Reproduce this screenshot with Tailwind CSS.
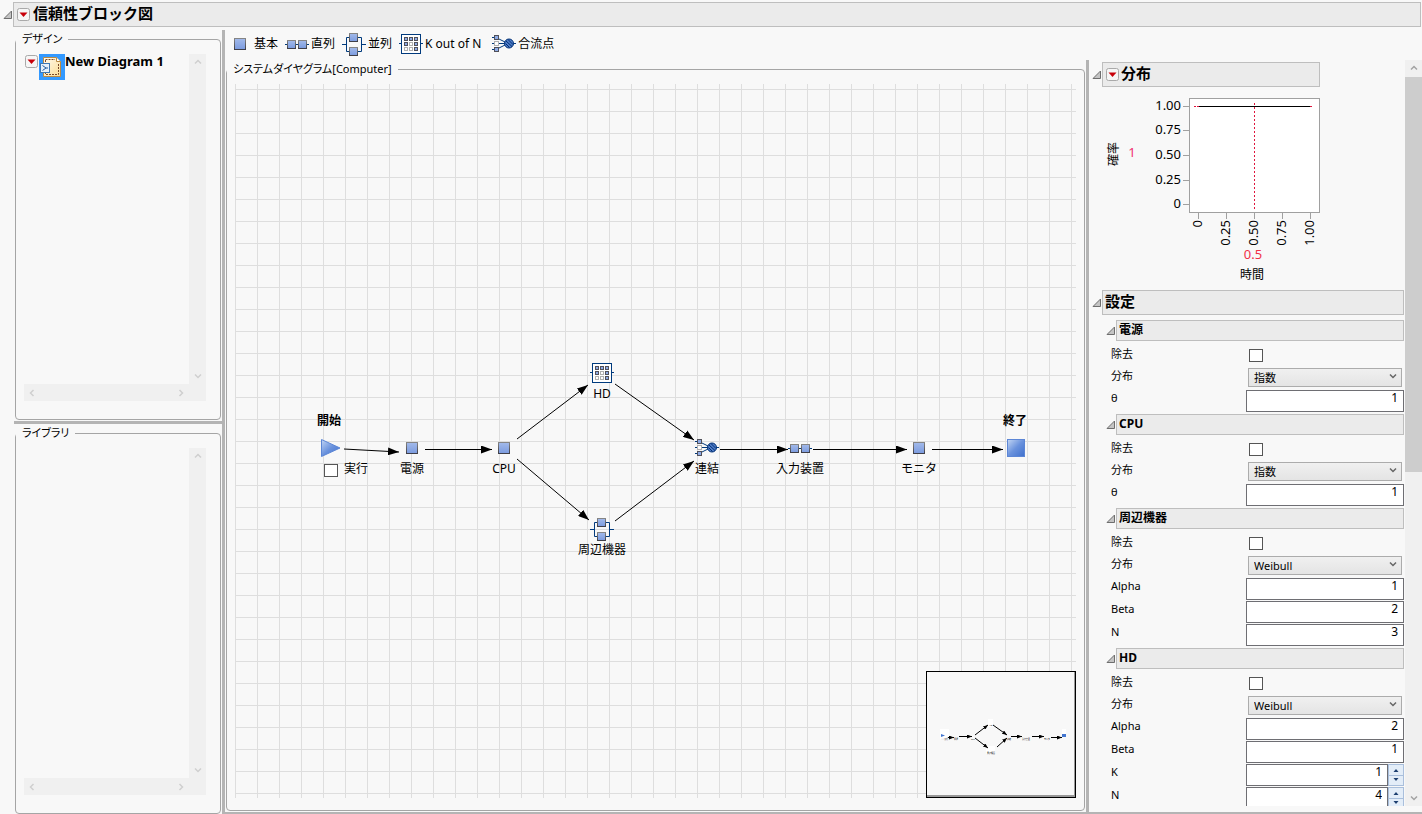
<!DOCTYPE html>
<html lang="ja">
<head>
  <meta charset="UTF-8" />
  <meta name="viewport" content="width=device-width, initial-scale=1.0" />
  <title>信頼性ブロック図</title>
  <script src="https://cdn.jsdelivr.net/npm/@tailwindcss/browser@4"></script>
</head>
<body class="h-screen flex flex-col overflow-hidden bg-[#f8f8f8] text-black text-xs leading-4 [font-family:'Noto_Sans','Noto_Sans_CJK_JP',sans-serif]">

  <!-- Shared icons -->
  <svg class="absolute w-0 h-0" aria-hidden="true">
    <defs>
      <linearGradient id="blue" x1="0" y1="0" x2="0" y2="1">
        <stop offset="0" stop-color="#a3baea" /><stop offset="1" stop-color="#7b9bdf" />
      </linearGradient>
      <linearGradient id="edge" x1="0" y1="0" x2="0" y2="1">
        <stop offset="0" stop-color="#858585" /><stop offset="1" stop-color="#3f3f48" />
      </linearGradient>
      <linearGradient id="shine" x1="0" y1="0" x2="1" y2="1">
        <stop offset="0" stop-color="#c3d6f4" /><stop offset="0.5" stop-color="#6a92dd" /><stop offset="1" stop-color="#3f70cd" />
      </linearGradient>
      <linearGradient id="paper" x1="0" y1="0" x2="1" y2="1">
        <stop offset="0" stop-color="#fffaf0" /><stop offset="1" stop-color="#fbdc94" />
      </linearGradient>
      <marker id="head" viewBox="0 0 11 8" refX="11" refY="4" markerWidth="11" markerHeight="8" markerUnits="userSpaceOnUse" orient="auto">
        <path d="M0 0L11 4L0 8z" />
      </marker>
      <marker id="headSmall" viewBox="0 0 5 4" refX="5" refY="2" markerWidth="5" markerHeight="4" markerUnits="userSpaceOnUse" orient="auto">
        <path d="M0 0L5 2L0 4z" />
      </marker>
      <symbol id="i-basic" viewBox="0 0 24 24">
        <rect x="6.500" y="6.500" width="11" height="11" fill="url(#blue)" stroke="url(#edge)" />
      </symbol>
      <symbol id="i-series" viewBox="0 0 24 24">
        <path d="M0 12.500h24" stroke="#003a7d" />
        <rect x="2.500" y="8.500" width="8" height="8" fill="url(#blue)" stroke="url(#edge)" />
        <rect x="13.500" y="8.500" width="8" height="8" fill="url(#blue)" stroke="url(#edge)" />
      </symbol>
      <symbol id="i-parallel" viewBox="0 0 24 24">
        <path d="M0 12.500h4.500M19.500 12.500H24M8 5.500H4.500v14H8M16 5.500h3.500v14H16" fill="none" stroke="#003a7d" />
        <rect x="7.500" y="1.500" width="8" height="8" fill="url(#blue)" stroke="url(#edge)" />
        <rect x="7.500" y="15.500" width="8" height="8" fill="url(#blue)" stroke="url(#edge)" />
      </symbol>
      <symbol id="i-kofn" viewBox="0 0 24 24">
        <path d="M0 11.500h2M22 11.500h2" stroke="#003a7d" />
        <rect x="2.500" y="2.500" width="19" height="19" fill="#fff" stroke="#003a7d" />
        <g fill="#8eabe6" stroke="#51515a">
          <rect x="5.500" y="5.500" width="3" height="3" /><rect x="10.500" y="5.500" width="3" height="3" /><rect x="15.500" y="5.500" width="3" height="3" />
          <rect x="5.500" y="10.500" width="3" height="3" /><rect x="15.500" y="10.500" width="3" height="3" /><rect x="15.500" y="15.500" width="3" height="3" />
        </g>
        <g fill="#fff" stroke="#b0b0b0">
          <rect x="10.500" y="10.500" width="3" height="3" /><rect x="5.500" y="15.500" width="3" height="3" /><rect x="10.500" y="15.500" width="3" height="3" />
        </g>
      </symbol>
      <symbol id="i-merge" viewBox="0 0 24 24">
        <path d="M0 5.500h4L15 11M0 11.500h24M0 17.500h4L15 12" fill="none" stroke="#003a7d" />
        <rect x="2.500" y="3.500" width="4" height="4" fill="#8eabe6" stroke="#51515a" />
        <rect x="2.500" y="9.500" width="4" height="4" fill="#fff" stroke="#b0b0b0" />
        <rect x="2.500" y="15.500" width="4" height="4" fill="#8eabe6" stroke="#51515a" />
        <circle cx="17" cy="11.500" r="4.500" fill="#4f7cc8" stroke="#002f73" />
        <path d="M14 9l6 5.500M16 7.500l5 5M13.500 11.500l4 4" stroke="#002f73" />
      </symbol>
      <symbol id="i-open" viewBox="0 0 10 10">
        <path d="M1 8.500h7.500V1z" fill="#c4c4c4" stroke="#6e6e6e" />
      </symbol>
      <symbol id="i-menu" viewBox="0 0 13 13">
        <rect x="0.500" y="0.500" width="12" height="12" rx="2" fill="#f6f6f6" stroke="#a9a9a9" />
        <path d="M2.500 4.500h8L6.500 9z" fill="#c8000a" />
      </symbol>
      <symbol id="i-chev" viewBox="0 0 8 8">
        <path d="M1 2.500l3 3l3-3" fill="none" stroke="currentColor" stroke-width="1.500" />
      </symbol>
    </defs>
  </svg>

  <!-- Title -->
  <header class="flex items-center mt-0.5 mb-[3px] pl-[3px] pr-px">
    <button class="w-2.5 h-2.5" aria-label="閉じる"><svg class="w-2.5 h-2.5"><use href="#i-open" /></svg></button>
    <div class="flex-1 h-[25px] flex items-center gap-[3px] pl-[3px] bg-[#ebebeb] border border-[#bebebe]">
      <button aria-label="メニュー"><svg class="w-[13px] h-[13px]"><use href="#i-menu" /></svg></button>
      <h1 class="pb-1 text-[15px] leading-5 font-bold">信頼性ブロック図</h1>
    </div>
  </header>

  <main class="flex-1 min-h-0 flex">

    <!-- Left lists -->
    <div class="w-[222px] shrink-0 pl-3.5 flex flex-col">
      <fieldset class="flex-1 min-h-0 mt-px ml-px mr-px border border-[#a5a5a5] rounded-[4px] pt-[7px] pb-[18px] pl-2 pr-3.5">
        <legend class="px-1.5 -ml-2 text-[11px] leading-4 [font-feature-settings:'palt']">デザイン</legend>
        <div class="h-full grid grid-cols-[1fr_17px] grid-rows-[1fr_17px]">
          <div class="flex items-start pl-px overflow-hidden">
            <button class="mt-px" aria-label="メニュー"><svg class="w-[13px] h-[13px]"><use href="#i-menu" /></svg></button>
            <svg class="w-[26px] h-[26px] ml-px shrink-0 bg-[#3399ff]" viewBox="0 0 26 26">
              <path d="M4.500 3.500h13l4 4v15h-17z" fill="url(#paper)" stroke="#b98a45" />
              <path d="M6.500 5.500h9.500M19.500 10v10.500h-13V5.500" fill="none" stroke="#7a4a28" stroke-dasharray="2 1" />
              <path d="M17.500 3.500v4h4" fill="#fff" stroke="#b98a45" />
              <rect x="1.500" y="9.500" width="9" height="9" fill="#e5f0fa" stroke="#3c78b4" />
              <path d="M3.500 11.500l3.500 2.500l-3.500 2.500M7 14h2" fill="none" stroke="#1d5a9d" />
            </svg>
            <span class="text-[13px] leading-[14px] font-bold whitespace-nowrap">New Diagram 1</span>
          </div>
          <div class="flex flex-col justify-between items-center py-1 bg-[#f0f0f0] text-[#cfcfcf]">
            <svg class="w-2 h-2 rotate-180"><use href="#i-chev" /></svg>
            <svg class="w-2 h-2"><use href="#i-chev" /></svg>
          </div>
          <div class="flex justify-between items-center px-1 bg-[#f0f0f0] text-[#cfcfcf]">
            <svg class="w-2 h-2 rotate-90"><use href="#i-chev" /></svg>
            <svg class="w-2 h-2 -rotate-90"><use href="#i-chev" /></svg>
          </div>
          <div class="bg-[#f0f0f0]"></div>
        </div>
      </fieldset>
      <div class="h-[3px] mt-px mb-px bg-[#b4b4b4]"></div>
      <fieldset class="flex-1 min-h-0 ml-px mr-px border border-[#a5a5a5] rounded-[4px] pt-[7px] pb-[18px] pl-2 pr-3.5">
        <legend class="px-1.5 -ml-2 text-[11px] leading-4 [font-feature-settings:'palt']">ライブラリ</legend>
        <div class="h-full grid grid-cols-[1fr_17px] grid-rows-[1fr_17px]">
          <div></div>
          <div class="flex flex-col justify-between items-center py-1 bg-[#f0f0f0] text-[#cfcfcf]">
            <svg class="w-2 h-2 rotate-180"><use href="#i-chev" /></svg>
            <svg class="w-2 h-2"><use href="#i-chev" /></svg>
          </div>
          <div class="flex justify-between items-center px-1 bg-[#f0f0f0] text-[#cfcfcf]">
            <svg class="w-2 h-2 rotate-90"><use href="#i-chev" /></svg>
            <svg class="w-2 h-2 -rotate-90"><use href="#i-chev" /></svg>
          </div>
          <div class="bg-[#f0f0f0]"></div>
        </div>
      </fieldset>
    </div>

    <div class="flex-1 min-w-0 flex flex-col border-l-3 border-b-2 border-[#b4b4b4]">

      <!-- Toolbar -->
      <div class="h-[30px] shrink-0 flex items-start gap-[7px] pt-0.5 pl-[3px] whitespace-nowrap">
        <button class="flex items-center gap-0.5"><svg class="w-6 h-6"><use href="#i-basic" /></svg>基本</button>
        <button class="flex items-center gap-0.5"><svg class="w-6 h-6"><use href="#i-series" /></svg>直列</button>
        <button class="flex items-center gap-0.5"><svg class="w-6 h-6"><use href="#i-parallel" /></svg>並列</button>
        <button class="flex items-center gap-0.5 pr-1"><svg class="w-6 h-6"><use href="#i-kofn" /></svg>K out of N</button>
        <button class="flex items-center gap-0.5"><svg class="w-6 h-6"><use href="#i-merge" /></svg>合流点</button>
      </div>

      <div class="flex-1 min-h-0 flex">

        <!-- Diagram -->
        <fieldset class="flex-1 min-w-0 mt-px mb-px mx-px border border-[#a5a5a5] rounded-[4px] pt-[7px] pb-3 px-2">
          <legend class="px-1.5 -ml-2 text-[11px] leading-4 [font-feature-settings:'palt']">システムダイヤグラム[Computer]</legend>
          <div class="relative h-full overflow-hidden bg-[linear-gradient(to_right,#dedede_1px,transparent_1px),linear-gradient(#dedede_1px,transparent_1px)] bg-[size:22px_22px] bg-[position:0_5px]">
            <svg class="absolute inset-0 w-full h-full" stroke="#000">
              <path d="M109 365L164 368" marker-end="url(#head)" />
              <path d="M190 365.500H257" marker-end="url(#head)" />
              <path d="M282 355L353 301" marker-end="url(#head)" />
              <path d="M282 375L354 436" marker-end="url(#head)" />
              <path d="M380 300L459 356" marker-end="url(#head)" />
              <path d="M380 437L459 377" marker-end="url(#head)" />
              <path d="M485 365.500H553" marker-end="url(#head)" />
              <path d="M578 365.500H672" marker-end="url(#head)" />
              <path d="M697 365.500H768" marker-end="url(#head)" />
            </svg>

            <div class="absolute left-[82px] top-[329px] flex flex-col">
              <b>開始</b>
              <svg class="w-6 h-6 mt-[7px]" viewBox="0 0 24 24"><path d="M4.500 3.500L23 12L4.500 20.500z" fill="url(#shine)" stroke="#5c86d6" /></svg>
              <label class="flex items-center gap-1.5 pl-[7px]"><input type="checkbox" class="appearance-none w-3.5 h-[13px] mt-1 bg-white border border-[#555]" />実行</label>
            </div>
            <div class="absolute left-[177px] top-[352px] -translate-x-1/2 flex flex-col items-center leading-[18px] whitespace-nowrap"><svg class="w-6 h-6"><use href="#i-basic" /></svg>電源</div>
            <div class="absolute left-[269px] top-[352px] -translate-x-1/2 flex flex-col items-center leading-[18px] whitespace-nowrap"><svg class="w-6 h-6"><use href="#i-basic" /></svg>CPU</div>
            <div class="absolute left-[367px] top-[277px] -translate-x-1/2 flex flex-col items-center leading-[18px] whitespace-nowrap"><svg class="w-6 h-6"><use href="#i-kofn" /></svg>HD</div>
            <div class="absolute left-[367px] top-[433px] -translate-x-1/2 flex flex-col items-center leading-[18px] whitespace-nowrap"><svg class="w-6 h-6"><use href="#i-parallel" /></svg>周辺機器</div>
            <div class="absolute left-[472px] top-[352px] -translate-x-1/2 flex flex-col items-center leading-[18px] whitespace-nowrap"><svg class="w-6 h-6"><use href="#i-merge" /></svg>連結</div>
            <div class="absolute left-[565px] top-[352px] -translate-x-1/2 flex flex-col items-center leading-[18px] whitespace-nowrap"><svg class="w-6 h-6"><use href="#i-series" /></svg>入力装置</div>
            <div class="absolute left-[684px] top-[352px] -translate-x-1/2 flex flex-col items-center leading-[18px] whitespace-nowrap"><svg class="w-6 h-6"><use href="#i-basic" /></svg>モニタ</div>
            <div class="absolute left-[780px] top-[329px] -translate-x-1/2 flex flex-col items-center whitespace-nowrap"><b>終了</b><svg class="w-6 h-6 mt-[7px]" viewBox="0 0 24 24"><rect x="4.500" y="3.500" width="17" height="17" fill="url(#shine)" stroke="#5c86d6" /></svg></div>

            <!-- Overview map -->
            <div class="absolute right-0 bottom-0 w-[150px] h-[127px] bg-[#f8f8f8] border border-black shadow-[inset_-1px_-2px_#999]">
              <svg class="w-full h-full" viewBox="1 1 148 125">
                <path d="M14 58h9v10h-9zM62 48h5v8h-5zM60 75h9v8h-9zM136 58h4v8h-4z" fill="#fff" />
                <path d="M15 63l4 1.500l-4 1.500z" fill="#4477d0" />
                <rect x="136" y="63" width="4" height="3" fill="#4477d0" />
                <g stroke="#000">
                  <path d="M22 66.500H28" marker-end="url(#headSmall)" />
                  <path d="M33 65.500H46" marker-end="url(#headSmall)" />
                  <path d="M49 64L62 54" marker-end="url(#headSmall)" />
                  <path d="M49 67L62 77" marker-end="url(#headSmall)" />
                  <path d="M67 54L81 64" marker-end="url(#headSmall)" />
                  <path d="M71 76L81 67" marker-end="url(#headSmall)" />
                  <path d="M85 65.500H96" marker-end="url(#headSmall)" />
                  <path d="M106 65.500H118" marker-end="url(#headSmall)" />
                  <path d="M125 66.500H136" marker-end="url(#headSmall)" />
                </g>
                <g class="text-[2px]" text-anchor="middle">
                  <text x="19" y="69">□ 実行</text><text x="30" y="69">電源</text><text x="47" y="69">CPU</text><text x="65" y="55">HD</text>
                  <text x="65" y="83">周辺機器</text><text x="83" y="69">連結</text><text x="100" y="69">入力装置</text><text x="121" y="69">モニタ</text>
                </g>
              </svg>
            </div>
          </div>
        </fieldset>

        <div class="w-[3px] shrink-0 bg-[#b4b4b4]"></div>

        <!-- Properties -->
        <aside class="w-[333px] shrink-0 mb-1.5 flex">
          <div class="w-[316px] overflow-hidden pt-0.5 pl-[3px] pr-px">
            <div class="flex items-center w-[228px]">
              <button class="w-2.5 h-2.5" aria-label="閉じる"><svg class="w-2.5 h-2.5"><use href="#i-open" /></svg></button>
              <div class="flex-1 h-[25px] flex items-center gap-0.5 pl-[3px] bg-[#ebebeb] border border-[#bebebe]">
                <button aria-label="メニュー"><svg class="w-[13px] h-[13px]"><use href="#i-menu" /></svg></button>
                <h2 class="pb-1 text-[15px] leading-5 font-bold">分布</h2>
              </div>
            </div>

            <svg class="block w-[232px] h-[203px] -ml-[3px]" viewBox="0 -1 232 203">
              <rect x="100.500" y="10.500" width="130" height="114" fill="#fff" stroke="#a0a0a0" />
              <path d="M94 18.500h6M94 42.500h6M94 67.500h6M94 92.500h6M94 116.500h6M109.500 125v6M137.500 125v6M165.500 125v6M193.500 125v6M221.500 125v6" stroke="#a0a0a0" />
              <path d="M165.500 15v107" stroke="#e0143c" stroke-dasharray="2 2" />
              <path d="M105 18.500h2M108 18.500h2M221 18.500h2" stroke="#e0143c" />
              <path d="M110 18.500h111" stroke="#000" />
              <g class="text-[13px]" text-anchor="end">
                <text x="92" y="22">1.00</text><text x="92" y="46">0.75</text><text x="92" y="71">0.50</text><text x="92" y="96">0.25</text><text x="92" y="120">0</text>
                <text transform="translate(113 132) rotate(-90)">0</text>
                <text transform="translate(141 132) rotate(-90)">0.25</text>
                <text transform="translate(169 132) rotate(-90)">0.50</text>
                <text transform="translate(197 132) rotate(-90)">0.75</text>
                <text transform="translate(225 132) rotate(-90)">1.00</text>
              </g>
              <g text-anchor="middle">
                <text x="164" y="171" fill="#f03048" class="text-[13px]">0.5</text>
                <text x="43" y="69" fill="#f03070" class="text-[13px]">1</text>
                <text x="163" y="191">時間</text>
                <text transform="translate(29 66) rotate(-90)">確率</text>
              </g>
            </svg>

            <div class="flex items-center mb-[5px]">
              <button class="w-2.5 h-2.5" aria-label="閉じる"><svg class="w-2.5 h-2.5"><use href="#i-open" /></svg></button>
              <h2 class="flex-1 h-[25px] pl-0.5 bg-[#ebebeb] border border-[#bebebe] text-[15px] leading-5 font-bold">設定</h2>
            </div>

            <div id="settings" class="pl-3.5 text-[11px] leading-[18px]"></div>
          </div>

          <!-- Scrollbar -->
          <div class="w-[17px] flex flex-col items-center bg-[#f0f0f0] text-[#a3a3a3]">
            <svg class="w-2 h-2 my-1 mb-[5px] shrink-0 rotate-180"><use href="#i-chev" /></svg>
            <div class="w-full h-[395px] bg-[#cdcdcd]"></div>
            <svg class="w-2 h-2 mt-auto mb-1 shrink-0"><use href="#i-chev" /></svg>
          </div>
        </aside>
      </div>
    </div>
  </main>

  <script>
    const blocks = [
      { name: '電源', dist: '指数', params: [['θ', 1]] },
      { name: 'CPU', dist: '指数', params: [['θ', 1]] },
      { name: '周辺機器', dist: 'Weibull', params: [['Alpha', 1], ['Beta', 2], ['N', 3]] },
      { name: 'HD', dist: 'Weibull', params: [['Alpha', 2], ['Beta', 1], ['K', 1, true], ['N', 4, true]] },
    ];

    const spinner = `
      <span class="w-4 h-[22px] flex flex-col border border-[#a9bfdc] bg-[#e3edf8]">
        <button class="flex-1 flex items-center justify-center border-b border-[#a9bfdc]" aria-label="増やす"><svg class="w-1.5 h-1" viewBox="0 0 6 4"><path d="M0.500 4L3 1L5.500 4z" fill="#1c3f70" /></svg></button>
        <button class="flex-1 flex items-center justify-center" aria-label="減らす"><svg class="w-1.5 h-1" viewBox="0 0 6 4"><path d="M0.500 0L3 3L5.500 0z" fill="#1c3f70" /></svg></button>
      </span>`;

    const paramRow = (b, [label, value, spin], i) => `
      <div class="flex items-start h-[23px] pl-[5px]">
        <label for="p${b}-${i}" class="w-[135px] shrink-0 leading-4">${label}</label>
        <input id="p${b}-${i}" type="text" value="${value}" class="flex-1 min-w-0 h-[22px] pr-[5px] pb-2 text-right text-xs leading-3 bg-white border border-[#6e6e73]" />
        ${spin ? spinner : ''}
      </div>`;

    document.getElementById('settings').innerHTML = blocks.map((block, b) => `
      <section class="mb-px">
        <div class="flex items-center">
          <button class="w-2.5 h-2.5" aria-label="閉じる"><svg class="w-2.5 h-2.5"><use href="#i-open" /></svg></button>
          <h3 class="flex-1 h-[21px] pl-0.5 bg-[#ebebeb] border border-[#bebebe] text-xs leading-[18px] font-bold">${block.name}</h3>
        </div>
        <div class="flex items-start h-[26px] pt-1 pl-[5px]">
          <label for="r${b}" class="w-[138px] shrink-0">除去</label>
          <input id="r${b}" type="checkbox" class="appearance-none w-3.5 h-[13px] mt-1 bg-white border border-[#555]" />
        </div>
        <div class="flex items-start h-[23px] pl-[5px]">
          <label for="d${b}" class="w-[137px] shrink-0">分布</label>
          <div class="relative flex-1 mr-0.5">
            <select id="d${b}" class="appearance-none block w-full h-[19px] mt-px pl-[5px] leading-[17px] border border-[#acacac] bg-linear-to-b from-[#f0f0f0] to-[#e4e4e4]"><option>${block.dist}</option></select>
            <svg class="absolute right-[5px] top-[5px] w-2 h-2 text-[#666] pointer-events-none"><use href="#i-chev" /></svg>
          </div>
        </div>
        ${block.params.map((p, i) => paramRow(b, p, i)).join('')}
      </section>`).join('');
  </script>
</body>
</html>
